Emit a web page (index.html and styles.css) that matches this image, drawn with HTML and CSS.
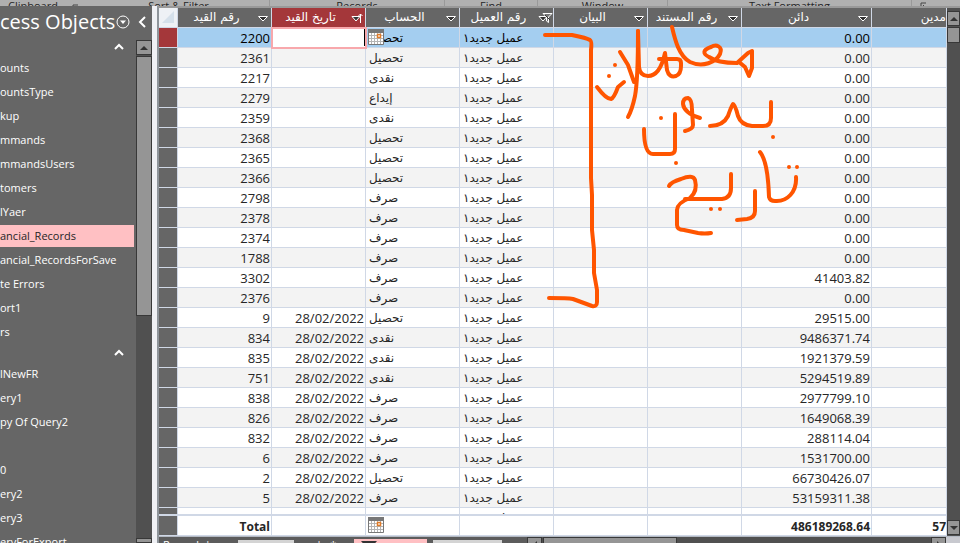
FILE: index.html
```html
<!DOCTYPE html>
<html lang="en">
<head>
<meta charset="utf-8">
<title>Financial_Records</title>
<link rel="stylesheet" href="styles.css">
</head>
<body>
<svg class="defs" width="0" height="0" aria-hidden="true">
  <symbol id="drop" viewBox="0 0 16 12"><path d="M3.500 4.500h9L8 9z" fill="#333" stroke="#fff"/></symbol>
  <symbol id="sorted" viewBox="0 0 16 12"><path d="M3 4.500h8L7 9z" fill="#333" stroke="#fff"/><path d="M11.500 11V2M9.500 4l2-2 2 2" fill="none" stroke="#fff"/></symbol>
  <symbol id="filtered" viewBox="0 0 16 12"><path d="M2 4.500h8L6 9z" fill="#333" stroke="#fff"/><path d="M6 1.500h9L11.500 5v5.500L9.500 9V5z" fill="#777" stroke="#fff"/><path d="M8 3l5 5" stroke="#333"/></symbol>
  <symbol id="calendar" viewBox="0 0 16 16"><path d="M.5.500h15v15H.5z" fill="#fff" stroke="#777"/><path d="M0 0h16v4H0z" fill="#777"/><path d="M3.500 4v11M6.500 4v11M9.500 4v11M12.500 4v11M1 6.500h14M1 9.500h14M1 12.500h14" stroke="#b4b4b4"/><path d="M9.500 5.500h3v3h-3z" fill="#fff" stroke="#e07b28" stroke-width="1.500"/></symbol>
  <symbol id="launch" viewBox="0 0 8 8"><path d="M1 6V1h5M3 3l4 4M7 4v3H4" fill="none" stroke="#444"/></symbol>
  <symbol id="up" viewBox="0 0 8 6"><path d="M0 5l4-4 4 4z" fill="#333"/></symbol>
  <symbol id="down" viewBox="0 0 8 6"><path d="M0 1l4 4 4-4z" fill="#333"/></symbol>
  <symbol id="fold" viewBox="0 0 10 7"><path d="M1 6l4-4 4 4" fill="none" stroke="#fff" stroke-width="2"/></symbol>
</svg>

<header class="ribbon">
  <span class="launcher">Clipboard<svg width="8" height="8"><use href="#launch"/></svg></span><span>Sort &amp; Filter</span><span>Records</span><span>Find</span><span>Window</span><span>Text Formatting</span><span><svg width="8" height="8"><use href="#launch"/></svg></span>
</header>

<div class="workspace">
  <nav class="pane">
    <div class="pane-title">
      <h1>cess Objects</h1>
      <button aria-label="Choose objects"><svg width="14" height="14" viewBox="0 0 14 14"><circle cx="7" cy="7" r="6" fill="none" stroke="#fff"/><path d="M4 5.500h6L7 9z" fill="#fff"/></svg></button>
      <button aria-label="Collapse pane"><svg width="8" height="12" viewBox="0 0 8 12"><path d="M7 1L2 6l5 5" fill="none" stroke="#fff" stroke-width="2"/></svg></button>
    </div>
    <div class="pane-body">
      <div class="objects">
        <button class="group" aria-label="Tables"><svg width="10" height="7"><use href="#fold"/></svg></button>
        <ul>
          <li><a href="#">ounts</a></li>
          <li><a href="#">ountsType</a></li>
          <li><a href="#">kup</a></li>
          <li><a href="#">mmands</a></li>
          <li><a href="#">mmandsUsers</a></li>
          <li><a href="#">tomers</a></li>
          <li><a href="#">lYaer</a></li>
          <li><a href="#" class="current">ancial_Records</a></li>
          <li><a href="#">ancial_RecordsForSave</a></li>
          <li><a href="#">te Errors</a></li>
          <li><a href="#">ort1</a></li>
          <li><a href="#">rs</a></li>
        </ul>
        <button class="group" aria-label="Queries"><svg width="10" height="7"><use href="#fold"/></svg></button>
        <ul>
          <li><a href="#">lNewFR</a></li>
          <li><a href="#">ery1</a></li>
          <li><a href="#">py Of Query2</a></li>
          <li></li>
          <li><a href="#">0</a></li>
          <li><a href="#">ery2</a></li>
          <li><a href="#">ery3</a></li>
          <li><a href="#">eryForExport</a></li>
        </ul>
      </div>
      <div class="vbar pane-bar">
        <button aria-label="Scroll up"><svg width="8" height="6"><use href="#up"/></svg></button>
        <div class="thumb"></div>
        <button class="end" aria-label="Scroll down"></button>
      </div>
    </div>
  </nav>

  <main class="sheet">
    <div class="sheet-top">
      <div class="sheet-data">
        <div class="rows">
          <table>
            <colgroup><col class="sel"><col span="6" class="std"><col class="wide"><col></colgroup>
            <thead>
              <tr>
                <th class="corner"><svg width="12" height="12" viewBox="0 0 12 12"><path d="M12 0v12H0z" fill="#d5e0ea"/></svg></th>
                <th><div><span>رقم القيد</span><button aria-label="Menu"><svg width="16" height="12"><use href="#drop"/></svg></button></div></th>
                <th class="active"><div><span>تاريخ القيد</span><button aria-label="Menu"><svg width="16" height="12"><use href="#sorted"/></svg></button></div></th>
                <th><div><span>الحساب</span><button aria-label="Menu"><svg width="16" height="12"><use href="#drop"/></svg></button></div></th>
                <th><div><span>رقم العميل</span><button aria-label="Menu"><svg width="16" height="12"><use href="#filtered"/></svg></button></div></th>
                <th><div><span>البيان</span><button aria-label="Menu"><svg width="16" height="12"><use href="#drop"/></svg></button></div></th>
                <th><div><span>رقم المستند</span><button aria-label="Menu"><svg width="16" height="12"><use href="#drop"/></svg></button></div></th>
                <th><div><span>دائن</span><button aria-label="Menu"><svg width="16" height="12"><use href="#drop"/></svg></button></div></th>
                <th class="cut"><div><span>مدين</span></div></th>
              </tr>
            </thead>
            <tbody>
              <tr class="current"><th></th><td>2200</td><td class="editing"><input type="text" aria-label="تاريخ القيد"></td><td class="ar picker">تحصيل<button aria-label="Pick date"><svg width="16" height="16"><use href="#calendar"/></svg></button></td><td class="ar">عميل جديد١</td><td></td><td></td><td>0.00</td><td></td></tr>
              <tr><th></th><td>2361</td><td></td><td class="ar">تحصيل</td><td class="ar">عميل جديد١</td><td></td><td></td><td>0.00</td><td></td></tr>
              <tr><th></th><td>2217</td><td></td><td class="ar">نقدى</td><td class="ar">عميل جديد١</td><td></td><td></td><td>0.00</td><td></td></tr>
              <tr><th></th><td>2279</td><td></td><td class="ar">إيداع</td><td class="ar">عميل جديد١</td><td></td><td></td><td>0.00</td><td></td></tr>
              <tr><th></th><td>2359</td><td></td><td class="ar">نقدى</td><td class="ar">عميل جديد١</td><td></td><td></td><td>0.00</td><td></td></tr>
              <tr><th></th><td>2368</td><td></td><td class="ar">تحصيل</td><td class="ar">عميل جديد١</td><td></td><td></td><td>0.00</td><td></td></tr>
              <tr><th></th><td>2365</td><td></td><td class="ar">تحصيل</td><td class="ar">عميل جديد١</td><td></td><td></td><td>0.00</td><td></td></tr>
              <tr><th></th><td>2366</td><td></td><td class="ar">تحصيل</td><td class="ar">عميل جديد١</td><td></td><td></td><td>0.00</td><td></td></tr>
              <tr><th></th><td>2798</td><td></td><td class="ar">صرف</td><td class="ar">عميل جديد١</td><td></td><td></td><td>0.00</td><td></td></tr>
              <tr><th></th><td>2378</td><td></td><td class="ar">صرف</td><td class="ar">عميل جديد١</td><td></td><td></td><td>0.00</td><td></td></tr>
              <tr><th></th><td>2374</td><td></td><td class="ar">صرف</td><td class="ar">عميل جديد١</td><td></td><td></td><td>0.00</td><td></td></tr>
              <tr><th></th><td>1788</td><td></td><td class="ar">صرف</td><td class="ar">عميل جديد١</td><td></td><td></td><td>0.00</td><td></td></tr>
              <tr><th></th><td>3302</td><td></td><td class="ar">صرف</td><td class="ar">عميل جديد١</td><td></td><td></td><td>41403.82</td><td></td></tr>
              <tr><th></th><td>2376</td><td></td><td class="ar">صرف</td><td class="ar">عميل جديد١</td><td></td><td></td><td>0.00</td><td></td></tr>
              <tr><th></th><td>9</td><td>28/02/2022</td><td class="ar">تحصيل</td><td class="ar">عميل جديد١</td><td></td><td></td><td>29515.00</td><td></td></tr>
              <tr><th></th><td>834</td><td>28/02/2022</td><td class="ar">نقدى</td><td class="ar">عميل جديد١</td><td></td><td></td><td>9486371.74</td><td></td></tr>
              <tr><th></th><td>835</td><td>28/02/2022</td><td class="ar">نقدى</td><td class="ar">عميل جديد١</td><td></td><td></td><td>1921379.59</td><td></td></tr>
              <tr><th></th><td>751</td><td>28/02/2022</td><td class="ar">نقدى</td><td class="ar">عميل جديد١</td><td></td><td></td><td>5294519.89</td><td></td></tr>
              <tr><th></th><td>838</td><td>28/02/2022</td><td class="ar">صرف</td><td class="ar">عميل جديد١</td><td></td><td></td><td>2977799.10</td><td></td></tr>
              <tr><th></th><td>826</td><td>28/02/2022</td><td class="ar">صرف</td><td class="ar">عميل جديد١</td><td></td><td></td><td>1649068.39</td><td></td></tr>
              <tr><th></th><td>832</td><td>28/02/2022</td><td class="ar">صرف</td><td class="ar">عميل جديد١</td><td></td><td></td><td>288114.04</td><td></td></tr>
              <tr><th></th><td>6</td><td>28/02/2022</td><td class="ar">صرف</td><td class="ar">عميل جديد١</td><td></td><td></td><td>1531700.00</td><td></td></tr>
              <tr><th></th><td>2</td><td>28/02/2022</td><td class="ar">تحصيل</td><td class="ar">عميل جديد١</td><td></td><td></td><td>66730426.07</td><td></td></tr>
              <tr><th></th><td>5</td><td>28/02/2022</td><td class="ar">صرف</td><td class="ar">عميل جديد١</td><td></td><td></td><td>53159311.38</td><td></td></tr>
              <tr><th></th><td>11</td><td>28/02/2022</td><td class="ar">صرف</td><td class="ar">عميل جديد١</td><td></td><td></td><td>7340374.18</td><td></td></tr>
            </tbody>
          </table>
        </div>
        <table class="totals">
          <colgroup><col class="sel"><col span="6" class="std"><col class="wide"><col></colgroup>
          <tbody><tr><th></th><td>Total</td><td></td><td class="picker"><button aria-label="Pick date"><svg width="16" height="16"><use href="#calendar"/></svg></button></td><td></td><td></td><td></td><td>486189268.64</td><td class="cut">57</td></tr></tbody>
        </table>
      </div>
      <div class="vbar sheet-bar">
        <button aria-label="Scroll up"><svg width="8" height="6"><use href="#up"/></svg></button>
        <div class="thumb"></div>
        <button class="end" aria-label="Scroll down"><svg width="8" height="6"><use href="#down"/></svg></button>
      </div>
    </div>
    <footer class="record-bar">
      <label for="record">Record: |◂ ◂</label>
      <input id="record" class="record" type="text" value="1 of 1782">
      <span class="steps">▸ ▸| ▸*</span>
      <button class="filter"><svg width="16" height="12" viewBox="0 0 16 12"><path d="M0 0h16l-6 7v5H6V7z" fill="#333"/></svg>Filtered</button>
      <input class="search" type="text" value="Search" aria-label="Search">
      <div class="hbar"><button aria-label="Scroll left"><svg width="6" height="8" viewBox="0 0 6 8"><path d="M5 0L1 4l4 4z" fill="#333"/></svg></button><div class="thumb"></div><button class="end" aria-label="Scroll right"><svg width="6" height="8" viewBox="0 0 6 8"><path d="M1 0l4 4-4 4z" fill="#333"/></svg></button></div>
    </footer>
  </main>
</div>

<svg class="ink" width="960" height="543" viewBox="0 0 960 543" aria-hidden="true">
  <path d="M545 35H572Q587 38 590 40Q592 41 591 50V178L592 195 592 230 594 250V273L597 290V302Q597 307 592 306L573 299Q568 298 549 298"/>
  <path d="M672 27C675 40 679 56 690 62C703 68 716 62 720 54C723 46 716 44 711 47C702 50 703 54 709 57C716 62 725 63 737 63L748 53 752 51V68L749 76 745 67 739 62"/>
  <path d="M638 31L639 67Q640 76 648 76Q660 76 665 53L667 70Q669 78 676 76Q681 74 681 66V63Q681 59 677 59H659"/>
  <path d="M638 31Q638 80 635 96Q632 110 628 117M620 52L628 65 634 82"/>
  <path d="M597 87Q606 99 611 99Q614 98 618 87L624 82"/>
  <path d="M771 102V118Q771 126 763 126H752Q741 125 738 116Q735 104 733 104Q731 107 728 116Q723 126 710 126"/>
  <path d="M700 118Q684 113 683 104Q683 98 688 98Q692 99 692 110L693 125Q693 129 685 131"/>
  <path d="M675 114V149Q675 154 670 154H653Q644 154 644 129"/>
  <path d="M796 177C797 192 787 202 775 201Q770 201 769 197Q768 162 760 152"/>
  <path d="M755 191V211Q755 218 747 219L737 220"/>
  <path d="M731 174V188Q731 198 722 199H685M669 186Q671 182 681 179Q693 174 695 180Q698 191 690 198Q677 203 677 210V225Q677 230 684 230L698 233Q705 234 711 233"/>
  <path d="M615 65h0M609 76h0M661 118h0M773 137h0M676 163h0M789 167h0M797 167h0M711 209h0M720 209h0"/>
</svg>
</body>
</html>
```
FILE: styles.css
```css
* { box-sizing: border-box; }

body {
  margin: 0;
  height: 100vh;
  overflow: hidden;
  display: flex;
  flex-direction: column;
  background: #666;
  font: 11px/16px "Open Sans", "Noto Sans", "DejaVu Sans", sans-serif;
  color: #262626;
}

button {
  display: flex;
  align-items: center;
  justify-content: center;
  flex: none;
  padding: 0;
  border: 0;
  background: none;
  font: inherit;
  color: inherit;
}

input { border: 0; padding: 0; font: inherit; }

.defs { position: absolute; }

/* Ribbon group labels */
.ribbon {
  flex: none;
  height: 6px;
  padding-bottom: 3px;
  overflow: hidden;
  display: grid;
  grid-template-columns: 88px 182px 175px 93px 130px 244px 1fr;
  align-items: end;
  background: #b0b0b0;
  line-height: 12px;
  text-align: center;
}

.ribbon span { border-right: 1px solid #999; }
.ribbon span:last-child { border: 0; text-align: left; padding-left: 8px; }
.ribbon .launcher { display: flex; align-items: end; justify-content: space-between; padding: 0 8px; border: 0; }

.workspace { flex: 1; min-height: 0; display: flex; }

/* Navigation pane */
.pane {
  flex: none;
  width: 157px;
  display: flex;
  flex-direction: column;
  color: #fff;
  border-right: 5px solid #f0f1f5;
}

.pane-title {
  flex: none;
  height: 32px;
  display: flex;
  align-items: center;
  gap: 8px;
}

.pane-title h1 {
  margin: 0;
  width: 108px;
  font-size: 20px;
  line-height: 32px;
  font-weight: 400;
  white-space: nowrap;
}

.pane-body { flex: 1; min-height: 0; display: flex; }

.objects { flex: 1; overflow: hidden; }

.objects .group {
  width: 100%;
  height: 16px;
  margin-bottom: 2px;
  padding-right: 12px;
  justify-content: flex-end;
}

.objects ul { margin: 0; padding: 0; list-style: none; }

.objects li { height: 24px; padding: 1px 2px 1px 0; }

.objects a {
  display: block;
  line-height: 22px;
  color: inherit;
  text-decoration: none;
  white-space: nowrap;
}

.objects .current { background: #ffc0c3; color: #262626; }

/* Scroll bars */
.vbar {
  flex: none;
  display: flex;
  flex-direction: column;
  gap: 1px;
  background: #505050;
}

.vbar button, .vbar .thumb, .hbar button, .hbar .thumb {
  background: #959595;
  border: 1px solid #383838;
}

.vbar button { height: 15px; }
.vbar .end, .hbar .end { margin-top: auto; }
.pane-bar { width: 16px; margin-top: 2px; }
.pane-bar .thumb { height: 260px; }
.pane-bar .end { height: 5px; }
.sheet-bar { width: 13px; padding: 3px 0 1px; }
.sheet-bar .thumb { height: 16px; }

/* Datasheet */
.sheet {
  flex: 1;
  min-width: 0;
  display: flex;
  flex-direction: column;
  border-left: 2px solid #8f959b;
  border-top: 2px solid #999;
}

.sheet-top { flex: 1; min-height: 0; display: flex; }

.sheet-data { flex: 1; min-width: 0; display: flex; flex-direction: column; }

.rows { flex: 1; min-height: 0; overflow: hidden; background: #fff; }

table {
  width: 100%;
  table-layout: fixed;
  border-collapse: separate;
  border-spacing: 0;
  font-size: 13px;
}

.sel { width: 19px; }
.std { width: 94px; }
.wide { width: 130px; }

th, td {
  height: 20px;
  padding: 2px 1px 0 3px;
  border-right: 1px solid #d0d8e6;
  border-bottom: 1px solid #d0d8e6;
  line-height: 17px;
  text-align: right;
  white-space: nowrap;
  overflow: hidden;
}

th {
  padding: 0;
  background: #666;
  color: #fff;
  font-weight: 400;
}

thead th { font-family: "DejaVu Sans", sans-serif; font-size: 12px; }
thead th div { height: 19px; display: flex; align-items: center; }
thead th span { flex: 1; text-align: center; }
thead .corner { background: #eef1f5; line-height: 12px; text-align: center; }
thead .active, .current th { background: #a4373a; }
thead .cut span { text-align: right; }

tbody tr:nth-child(even) td { background: #f3f3f3; }
tbody .current td { background: #a4cef0; color: #000; }

.ar {
  font-family: "DejaVu Sans", sans-serif;
  font-size: 12px;
  text-align: left;
}

td.picker { position: relative; }
.picker button { position: absolute; left: 2px; top: 1px; }

tbody .current .editing {
  position: relative;
  z-index: 1;
  padding: 0;
  background: #fff;
  border-color: #fff;
  outline: 2px solid #f8a8ac;
  outline-offset: -1px;
}

.editing input {
  display: block;
  width: 100%;
  height: 17px;
  border-right: 1px solid #000;
}

.totals {
  flex: none;
  border-top: 2px solid #d0d8e6;
  background: #fff;
  font-size: 12px;
  font-weight: 700;
}

.totals .cut { padding-right: 0; }

/* Record navigation */
.record-bar {
  flex: none;
  height: 7px;
  overflow: hidden;
  display: flex;
  align-items: flex-start;
  border-top: 1px solid #b4bac4;
  padding-left: 4px;
  line-height: 12px;
  color: #fff;
  background: #5c5c5c;
}

.record-bar label { width: 75px; padding-top: 2px; white-space: nowrap; }
.record-bar .record { width: 56px; height: 16px; margin-top: 3px; padding-left: 8px; background: #d4d4d4; color: #666; }
.record-bar .steps { width: 60px; padding: 2px 0 0 8px; }
.record-bar .filter { width: 73px; height: 16px; margin: 2px 6px 0 0; gap: 4px; background: #ffc0c3; color: #222; }
.record-bar .search { width: 69px; height: 16px; margin-top: 3px; padding-left: 3px; background: #d4d4d4; color: #666; }

.hbar {
  flex: 1;
  display: flex;
  gap: 1px;
  margin-left: 25px;
  padding-right: 0;
  height: 16px;
  border-right: 14px solid #c8c9cf;
  background: #505050;
}

.hbar button { width: 15px; }
.hbar .thumb { width: 134px; }
.hbar .end { margin: 0 0 0 auto; }

/* Freehand notes drawn over the sheet */
.ink {
  position: absolute;
  left: 0;
  top: 0;
  pointer-events: none;
  fill: none;
  stroke: #ff5500;
  stroke-width: 4;
  stroke-linecap: round;
  stroke-linejoin: round;
}
```
